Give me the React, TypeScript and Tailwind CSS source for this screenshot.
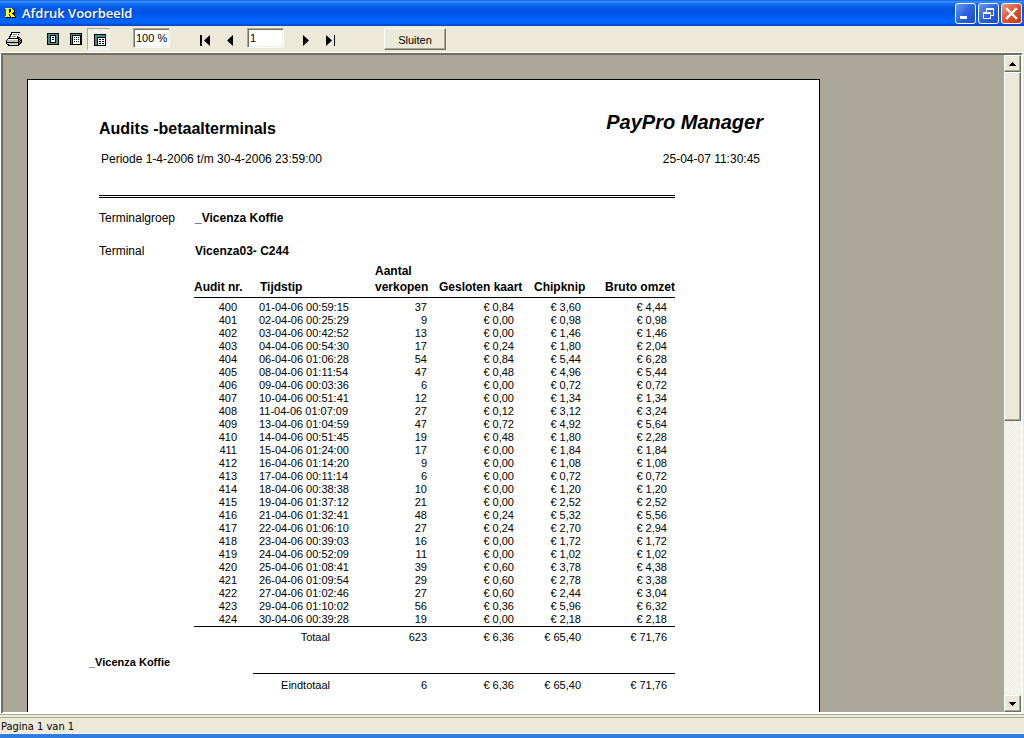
import type { ReactNode } from "react";

const audits = [
  ["400", "01-04-06 00:59:15", "37", "0,84", "3,60", "4,44"],
  ["401", "02-04-06 00:25:29", "9", "0,00", "0,98", "0,98"],
  ["402", "03-04-06 00:42:52", "13", "0,00", "1,46", "1,46"],
  ["403", "04-04-06 00:54:30", "17", "0,24", "1,80", "2,04"],
  ["404", "06-04-06 01:06:28", "54", "0,84", "5,44", "6,28"],
  ["405", "08-04-06 01:11:54", "47", "0,48", "4,96", "5,44"],
  ["406", "09-04-06 00:03:36", "6", "0,00", "0,72", "0,72"],
  ["407", "10-04-06 00:51:41", "12", "0,00", "1,34", "1,34"],
  ["408", "11-04-06 01:07:09", "27", "0,12", "3,12", "3,24"],
  ["409", "13-04-06 01:04:59", "47", "0,72", "4,92", "5,64"],
  ["410", "14-04-06 00:51:45", "19", "0,48", "1,80", "2,28"],
  ["411", "15-04-06 01:24:00", "17", "0,00", "1,84", "1,84"],
  ["412", "16-04-06 01:14:20", "9", "0,00", "1,08", "1,08"],
  ["413", "17-04-06 00:11:14", "6", "0,00", "0,72", "0,72"],
  ["414", "18-04-06 00:38:38", "10", "0,00", "1,20", "1,20"],
  ["415", "19-04-06 01:37:12", "21", "0,00", "2,52", "2,52"],
  ["416", "21-04-06 01:32:41", "48", "0,24", "5,32", "5,56"],
  ["417", "22-04-06 01:06:10", "27", "0,24", "2,70", "2,94"],
  ["418", "23-04-06 00:39:03", "16", "0,00", "1,72", "1,72"],
  ["419", "24-04-06 00:52:09", "11", "0,00", "1,02", "1,02"],
  ["420", "25-04-06 01:08:41", "39", "0,60", "3,78", "4,38"],
  ["421", "26-04-06 01:09:54", "29", "0,60", "2,78", "3,38"],
  ["422", "27-04-06 01:02:46", "27", "0,60", "2,44", "3,04"],
  ["423", "29-04-06 01:10:02", "56", "0,36", "5,96", "6,32"],
  ["424", "30-04-06 00:39:28", "19", "0,00", "2,18", "2,18"],
];

const checker =
  "bg-[conic-gradient(#ffffff_25%,#ece9d8_0_50%,#ffffff_0_75%,#ece9d8_0)] bg-[length:2px_2px]";
const raised =
  "border border-t-white border-l-white border-r-[#716f64] border-b-[#716f64] bg-[#ece9d8] shadow-[inset_-1px_-1px_0_#aca899]";
const sunken =
  "border border-t-[#aca899] border-l-[#aca899] border-r-white border-b-white shadow-[inset_1px_1px_0_#716f64,inset_-1px_-1px_0_#f1efe2]";

function ToolButton({ label, children }: { label: string; children: ReactNode }) {
  return (
    <button aria-label={label} className="flex size-[22px] shrink-0 items-center justify-center">
      {children}
    </button>
  );
}

function PrinterIcon() {
  return (
    <svg width="16" height="14" viewBox="0 0 16 14" shapeRendering="crispEdges">
      <path d="M5 0h9v1h-1v2h-1v2h2v1h1v1h1v4h-1v1h-1v1h-1v1H2v-1H1v-1H0V8h1V7h1V6h1V4h1V2h1z" fill="#000" />
      <path d="M6 1h7v1h-1v2h-1v2H4V5h1V3h1z" fill="#fff" />
      <path d="M7 2h4v1H7zM6 4h4v1H6z" fill="#808080" />
      <path d="M2 7h10v1H2z" fill="#fff" />
      <path d="M1 8h11v2H1z" fill="#c0c0c0" />
      <path d="M1 11h11v1H1z" fill="#c0c0c0" />
      <path d="M13 6h1v1h-1zM14 7h1v1h-1zM13 8h1v1h-1zM14 9h1v1h-1zM13 10h1v1h-1z" fill="#a0a0a0" />
      <path d="M8 9h3v1H8z" fill="#f0e000" />
      <path d="M3 12h9v1H3z" fill="#e0e0e0" />
    </svg>
  );
}

function PageFrame({ children }: { children: ReactNode }) {
  return (
    <svg width="12" height="12" viewBox="0 0 12 12" shapeRendering="crispEdges">
      <path d="M0 0h12v12H0z" fill="#000" />
      <path d="M1 1h10v10H1z" fill="#3e8f8c" />
      {children}
    </svg>
  );
}

function NavIcon({ d }: { d: string }) {
  return (
    <svg width="12" height="12" viewBox="0 0 12 12">
      <path d={d} />
    </svg>
  );
}

function CaptionButton({ label, className, children }: { label: string; className: string; children: ReactNode }) {
  return (
    <button
      aria-label={label}
      className={`flex size-[21px] items-center justify-center rounded-[3px] border border-white ${className}`}
    >
      <svg width="19" height="19" viewBox="0 0 19 19" fill="none" stroke="#fff">
        {children}
      </svg>
    </button>
  );
}

function TitleBar() {
  const blue = "bg-linear-to-br from-[#6c96f2] via-[#2d63e0] to-[#1a4bc8]";
  return (
    <header className="flex h-[26px] shrink-0 items-center bg-[linear-gradient(#0a5be8_0%,#3a91fb_6%,#1672f4_14%,#0559e8_28%,#0054e4_50%,#0060fa_70%,#0066ff_88%,#0050d8_94%,#003cc0_100%)] pr-0.5 pl-[5px]">
      <svg width="11" height="12" viewBox="0 0 11 12" shapeRendering="crispEdges">
        <path d="M1 2h8v1h1v3H9v1h1v2h1v2H7V9H6v2H1V9h1V4H1z" fill="#000" />
        <path d="M0 1h7v1h1v1h1v2H8v1H7v1h1v1h1v1h1v1H6V9H5V7H4v2h1v1H0V9h1V2H0zM4 2v4h1V5h1V2z" fill="#ffff00" fillRule="evenodd" />
      </svg>
      <h1 className="ml-1.5 flex-1 font-['Open_Sans','Noto_Sans',sans-serif] text-[13px] leading-4 font-semibold text-white [text-shadow:1px_1px_0_#0a3aa0]">
        Afdruk Voorbeeld
      </h1>
      <div className="flex gap-0.5">
        <CaptionButton label="Minimaliseren" className={blue}>
          <path d="M4 13.5h7" strokeWidth="3" />
        </CaptionButton>
        <CaptionButton label="Verkleinen" className={blue}>
          <path d="M7 5.5h8M7.5 5v3M14.5 5v7M11 11.5h4" />
          <path d="M7 4.5h8M4 8.5h8" />
          <path d="M4.500 9.500h7v5h-7z" />
        </CaptionButton>
        <CaptionButton label="Sluiten" className="bg-linear-to-br from-[#f09a80] via-[#e0512c] to-[#c33a12]">
          <path d="M5 5l9 9M14 5l-9 9" strokeWidth="2.400" strokeLinecap="square" />
        </CaptionButton>
      </div>
    </header>
  );
}

function Toolbar() {
  const field = `h-5 w-[37px] shrink-0 bg-white pl-0.5 text-[11px] leading-4 outline-none ${sunken}`;
  return (
    <div className="flex h-[26px] shrink-0 items-start pt-0.5 pl-[3px]">
      <ToolButton label="Afdrukken"><PrinterIcon /></ToolButton>
      <div className="ml-[17px] flex gap-px">
        <ToolButton label="Hele pagina">
          <PageFrame>
            <path d="M3 2h6v8H3z" fill="#000" />
            <path d="M4 3h4v6H4z" fill="#fff" />
            <path d="M5 4h2v1H5zM5 6h2v1H5z" fill="#000" />
          </PageFrame>
        </ToolButton>
        <ToolButton label="Paginabreedte">
          <PageFrame>
            <path d="M2 2h9v10H2z" fill="#000" />
            <path d="M3 3h7v8H3z" fill="#fff" />
            <path d="M4 4h1v1H4zM6 4h1v1H6zM8 4h1v1H8zM4 6h1v1H4zM6 6h1v1H6zM8 6h1v1H8zM4 8h1v1H4zM6 8h1v1H6zM8 8h1v1H8z" fill="#000" />
          </PageFrame>
        </ToolButton>
      </div>
      <button
        aria-label="Ware grootte"
        aria-pressed="true"
        className={`flex h-[22px] w-[23px] items-center border border-t-[#aca899] border-l-[#aca899] border-r-white border-b-white pt-0.5 pl-1.5 ${checker}`}
      >
        <PageFrame>
          <path d="M3 3h9v9H3z" fill="#000" />
          <path d="M4 4h7v7H4z" fill="#fff" />
          <path d="M5 5h2v1H5zM8 5h2v1H8zM5 7h2v1H5zM8 7h2v1H8zM5 9h2v1H5zM8 9h2v1H8z" fill="#000" />
        </PageFrame>
      </button>
      <input aria-label="Zoom" defaultValue="100 %" className={`ml-[23px] ${field}`} />
      <div className="ml-6 flex gap-[3px] pt-0.5">
        <ToolButton label="Eerste pagina">
          <NavIcon d="M1 0h2v11H1zM11 0v11L5 5.500z" />
        </ToolButton>
        <ToolButton label="Vorige pagina">
          <NavIcon d="M9 0v11L3 5.500z" />
        </ToolButton>
      </div>
      <input aria-label="Pagina" defaultValue="1" className={`ml-1.5 ${field}`} />
      <div className="ml-[11px] flex gap-[3px] pt-0.5">
        <ToolButton label="Volgende pagina">
          <NavIcon d="M3 0v11l6-5.500z" />
        </ToolButton>
        <ToolButton label="Laatste pagina">
          <NavIcon d="M1 0v11l6-5.500zM9 0h1v11H9z" />
        </ToolButton>
      </div>
      <button className={`ml-[42px] h-[22px] w-[62px] pt-0.5 text-[11px] leading-4 ${raised}`}>Sluiten</button>
    </div>
  );
}

function Columns() {
  return (
    <colgroup>
      <col className="w-[59px]" />
      <col className="w-[120px]" />
      <col className="w-[57px]" />
      <col className="w-[93px]" />
      <col className="w-16" />
      <col className="w-[88px]" />
    </colgroup>
  );
}

function Amounts({ values }: { values: string[] }) {
  const [count, card, chip, gross] = values;
  return (
    <>
      <td className="pr-[3px] text-right">{count}</td>
      <td className="pr-[9px] text-right">€ {card}</td>
      <td className="pr-[6px] text-right">€ {chip}</td>
      <td className="pr-2 text-right">€ {gross}</td>
    </>
  );
}

function AuditTable() {
  return (
    <table className="mt-1 ml-[95px] w-[481px] table-fixed text-[11px] leading-[13px]">
      <Columns />
      <thead className="border-b border-black text-left align-bottom text-[12px] leading-4 whitespace-nowrap">
        <tr>
          <th className="pb-0.5">Audit nr.</th>
          <th className="pb-0.5 pl-[7px]">Tijdstip</th>
          <th className="pb-0.5 pl-0.5">Aantal<br />verkopen</th>
          <th className="pb-0.5 pl-[9px]">Gesloten kaart</th>
          <th className="pb-0.5 pl-[11px]">Chipknip</th>
          <th className="pb-0.5 text-right">Bruto omzet</th>
        </tr>
      </thead>
      <tbody className="before:block before:h-[3px]">
        {audits.map(([nr, time, ...values]) => (
          <tr key={nr}>
            <td className="pr-4 text-right">{nr}</td>
            <td className="pl-[6px]">{time}</td>
            <Amounts values={values} />
          </tr>
        ))}
      </tbody>
      <tfoot className="border-t border-black">
        <tr className="[&>*]:pt-1">
          <td />
          <th scope="row" className="pr-[43px] text-right font-normal">Totaal</th>
          <Amounts values={["623", "6,36", "65,40", "71,76"]} />
        </tr>
      </tfoot>
    </table>
  );
}

function Report() {
  return (
    <article className="w-[793px] shrink-0 overflow-hidden border border-b-0 border-black bg-white pt-[30px] pr-14 pl-[71px] text-[12px] leading-4">
      <div className="flex justify-between">
        <h2 className="mt-[9px] text-[16px] leading-5 font-bold">Audits -betaalterminals</h2>
        <p className="text-[20px] leading-6 font-bold italic">PayPro Manager</p>
      </div>
      <div className="mt-3 flex justify-between pr-[3px] pl-0.5">
        <p>Periode 1-4-2006 t/m 30-4-2006 23:59:00</p>
        <p>25-04-07 11:30:45</p>
      </div>
      <hr className="mt-7 w-[576px] border-t-3 border-double border-black" />
      <dl className="mt-3 grid grid-cols-[96px_1fr] gap-y-[17px]">
        <dt>Terminalgroep</dt>
        <dd className="font-bold">_Vicenza Koffie</dd>
        <dt>Terminal</dt>
        <dd className="font-bold">Vicenza03- C244</dd>
      </dl>
      <AuditTable />
      <p className="mt-[10px] -ml-[10px] text-[11px] font-bold">_Vicenza Koffie</p>
      <table aria-label="Eindtotaal" className="mt-[3px] ml-[95px] w-[481px] table-fixed text-[11px] leading-[13px]">
        <Columns />
        <tbody>
          <tr className="[&>*]:pt-[5px] [&>*+*]:border-t [&>*+*]:border-black">
            <td />
            <th scope="row" className="pr-[43px] text-right font-normal">Eindtotaal</th>
            <Amounts values={["6", "6,36", "65,40", "71,76"]} />
          </tr>
        </tbody>
      </table>
    </article>
  );
}

function ScrollBar() {
  const button = `flex h-[17px] shrink-0 items-center justify-center ${raised}`;
  return (
    <div className={`flex w-[17px] shrink-0 flex-col ${checker}`}>
      <button aria-label="Omhoog" className={button}>
        <svg width="7" height="4" viewBox="0 0 7 4" shapeRendering="crispEdges"><path d="M3 0h1v1h1v1h1v1h1v1H0V3h1V2h1V1h1z" /></svg>
      </button>
      <div className="min-h-0 flex-1">
        <div className={`h-[56%] ${raised}`} />
      </div>
      <button aria-label="Omlaag" className={button}>
        <svg width="7" height="4" viewBox="0 0 7 4" shapeRendering="crispEdges"><path d="M0 0h7v1H6v1H5v1H4v1H3V3H2V2H1V1H0z" /></svg>
      </button>
    </div>
  );
}

export default function App() {
  return (
    <div className="flex h-screen flex-col overflow-hidden bg-[#ece9d8] font-['Liberation_Sans',Arial,sans-serif] text-black">
      <TitleBar />
      <Toolbar />
      <main className="flex min-h-0 flex-1 border-t border-l border-white pr-px">
        <div className="flex min-w-0 flex-1 border-2 border-t-[#716f64] border-r-white border-b-white border-l-[#716f64] bg-[#aca899]">
          <div className="flex min-w-0 flex-1 overflow-hidden pt-6 pl-6">
            <Report />
          </div>
          <ScrollBar />
        </div>
      </main>
      <div className="mb-0.5 h-px shrink-0 bg-[#aca899]" />
      <footer className="h-[17px] shrink-0 border-t border-b border-t-[#aca899] border-b-white pl-px font-['DejaVu_Sans_Condensed','DejaVu_Sans',sans-serif] text-[11px] leading-[17px]">
        Pagina 1 van 1
      </footer>
      <div className="h-1 shrink-0 bg-[#2f7be0]" />
    </div>
  );
}
